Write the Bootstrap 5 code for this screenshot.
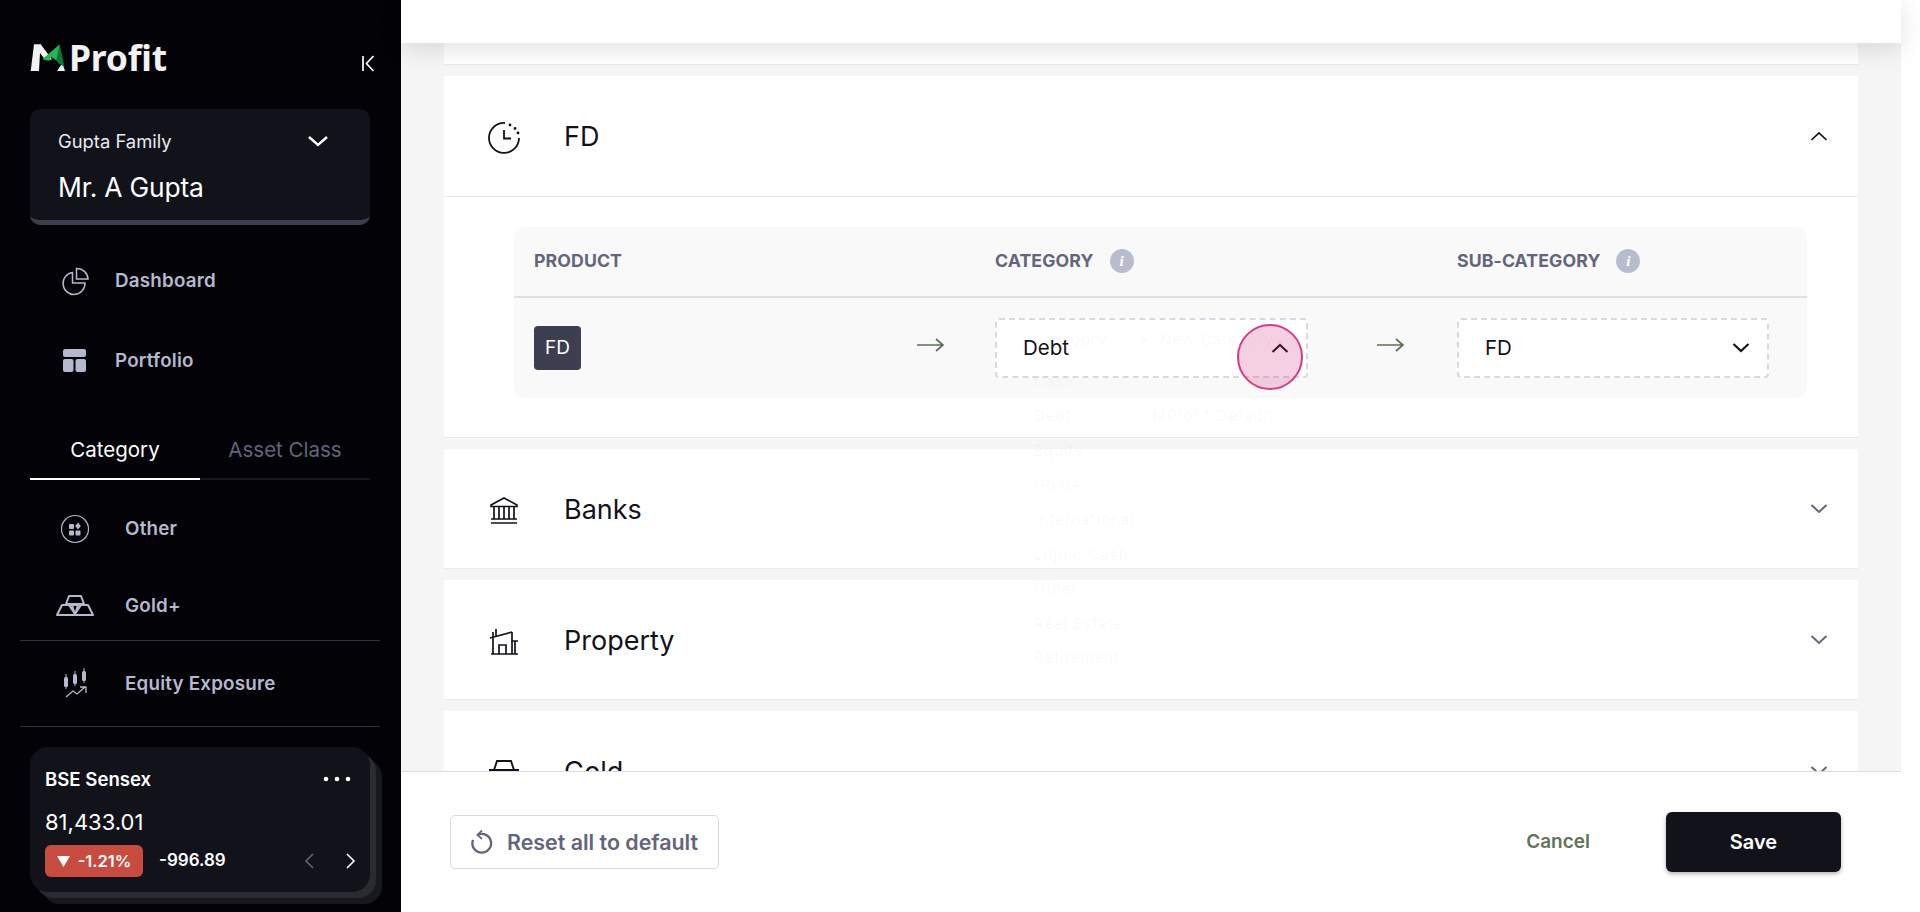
<!DOCTYPE html>
<html lang="en">
<head>
<meta charset="utf-8">
<title>MProfit</title>
<link href="https://cdn.jsdelivr.net/npm/bootstrap@5.3.0/dist/css/bootstrap.min.css" rel="stylesheet">
<style>
html,body{height:100%;overflow:hidden}
body{font-family:Inter,"Liberation Sans",sans-serif;background:#fff;color:#12131a}
.app-shell{height:912px}
.side-pane{width:401px;background:#020207;flex:none;padding:43px 0 0}
.logo-row{padding:0 26px 0 30px;height:66px}
.logo-word{font-family:"Noto Sans",sans-serif;font-weight:700;font-size:35.500px;line-height:29px;color:#f2f2f2;letter-spacing:-.2px;margin-left:-3px}
.collapse-ico{margin-top:11px}
.family-box{margin:0 31px 0 30px;height:116px;background:#12131a;border-radius:10px;border-bottom:5px solid #3d3f50;padding:20px 28px}
.family-sub{font-size:18.400px;line-height:24px;color:#e8e9f0}
.family-chev{margin-right:13px}
.family-name{font-size:26.400px;line-height:32px;color:#fff;margin-top:18px;letter-spacing:-.2px}
.side-link{padding-left:60px;height:80px;color:#b6b9cd;font-size:18.800px;font-weight:600;letter-spacing:.2px}
.side-link svg{width:30px;height:30px;margin-right:25px;flex:none}
.side-tabs{margin:22px 31px 0 30px;height:57px;font-size:20.500px}
.side-tab{width:170px;text-align:center;border-bottom:2px solid #17181f;color:#62657c;padding-top:12px}
.side-tab-on{color:#fff;border-bottom-color:#fff}
.cat-link{padding-left:50px;padding-top:2px;height:77px;color:#b6b9cd;font-size:18.800px;font-weight:600;letter-spacing:.2px}
.cat-link svg{width:50px;height:36px;margin-right:25px;margin-top:-2px;flex:none}
.cat-first{margin-top:10px}
.cat-last{height:73px;padding-top:5px}
.cat-tall{height:85px}
.side-rule{margin:0 21px 0 20px;border-top:1px solid #30323f}
.quote-box{margin:20px 31px 0 30px;height:145px;background:#12131a;border-radius:18px;padding:19px 15px;position:relative;color:#fff;box-shadow:6px 6px 0 #2a2b30,12px 12px 0 #18191e}
.quote-name{font-size:18.600px;font-weight:600;line-height:26px}
.quote-value{font-size:22px;line-height:28px;margin-top:16px}
.quote-row{margin-top:9px}
.quote-badge{background:#c84b40;border-radius:6px;height:32px;width:98px;font-size:16.500px;font-weight:600}
.quote-delta{font-size:17px;font-weight:600}
.quote-gap{margin-right:30px}
.quote-next{margin-right:-2px}
.main-pane{width:1500px;background:#f5f5f5;flex:none;position:relative}
.top-strip{height:43px;background:#fff;box-shadow:0 6px 24px rgba(0,0,0,.12);position:relative;z-index:3}
.scroll-zone{height:728px;overflow:hidden;padding:0 43px;position:relative}
.acc-stub{height:22px;background:#fff;border-bottom:1px solid #e9e9ee;margin-bottom:11px}
.acc-item{background:#fff;border-bottom:1px solid #e9e9ee;margin-bottom:11px}
.acc-head{height:119px;padding:0 30px 0 43px;font-size:27px}
.acc-head svg.acc-ico{width:34px;height:34px;margin-right:43px;margin-top:2px;flex:none}
.acc-title{padding-top:3px}
.acc-open{height:121px;border-bottom:1px solid #e9e9ee}
.map-wrap{padding:30px 51px 39px 70px}
.map-table{background:#f9f9f9;border-radius:10px;height:171px}
.map-grid{display:grid;grid-template-columns:481px 313px 149px 312px}
.map-headrow{height:71px;border-bottom:2px solid #dfdfe8;font-size:17.700px;font-weight:700;color:#62657c;letter-spacing:.1px;align-items:center}
.map-headrow>div:first-child{padding-left:20px}
.map-bodyrow{height:100px;align-items:start;padding-top:20px}
.prod-cell{padding:8px 51px 0 20px}
.arrow-mark{margin-top:11px}
.fd-chip{width:47px;height:44px;background:#3d3f50;border-radius:4px;color:#fff;font-size:19px}
.info-dot{width:24px;height:24px;border-radius:50%;background:#b8bccd;color:#fff;font-family:"Liberation Serif",serif;font-style:italic;font-weight:700;font-size:15px;margin-left:16px}
.dash-select{height:60px;background:#fff;border:2px dashed #d6d8e4;border-radius:4px;font-size:20.500px;padding:0 17px 0 26px;position:relative}
.arrow-cell{padding:19px 53px 0 0}
.ghost-menu{position:absolute;left:37px;top:3px;width:240px;color:rgba(0,0,0,.035);font-size:15px;letter-spacing:1px;line-height:34.600px;white-space:nowrap}
.ghost-gap{margin-top:7px}
.tap-mark{position:absolute;left:240px;top:4px;width:66px;height:66px;border-radius:50%;background:rgba(214,59,138,.24);border:2px solid #d63b8a}
.foot-bar{height:141px;background:#fff;border-top:1px solid #dcdce8;padding:0 60px 0 49px}
.reset-btn{width:269px;height:54px;background:#fff;border:1px solid #d8dae6;border-radius:5px;color:#62657c;font-size:21.400px;font-weight:600;padding:0 0 0 18px;white-space:nowrap;column-gap:13px}
.cancel-link{color:#62745c;font-size:19px;font-weight:600;margin-right:76px}
.save-btn{width:175px;height:60px;background:#12131a;color:#fff;border:0;border-radius:6px;font-size:20px;font-weight:600;box-shadow:0 2px 4px rgba(0,0,0,.3)}
.edge-strip{flex:1;background:#fff}
</style>
</head>
<body>
<div class="app-shell d-flex">
  <aside class="side-pane">
    <div class="logo-row d-flex justify-content-between align-items-start">
      <div class="d-flex">
        <svg width="42" height="30" viewBox="0 0 42 30"><path fill="#f2f2f2" d="M.7 28 4 1.300H10.700L22 16.500H15L10 10 9 28Z"/><path fill="#f2f2f2" d="M27 28h8L32.500 20Z"/><path fill="#22b455" d="M12.300 16.300 29.700 1.300 27.300 18 20.700 13.700 19 18Z"/><path fill="#0d7434" d="M29.700 1.300 34.500 24 28 20 26.500 17Z"/></svg>
        <span class="logo-word">Profit</span>
      </div>
      <svg class="collapse-ico" width="14" height="19" viewBox="0 0 14 19"><path d="M2 2v15M12.500 2 5.500 9.500l7 7.500" fill="none" stroke="#fff" stroke-width="1.700"/></svg>
    </div>
    <div class="family-box">
      <div class="d-flex justify-content-between align-items-center family-sub"><span>Gupta Family</span>
        <svg class="family-chev" width="22" height="12" viewBox="0 0 22 12"><path d="M2 2l9 8 9-8" fill="none" stroke="#fff" stroke-width="2.400"/></svg></div>
      <div class="family-name">Mr. A Gupta</div>
    </div>
    <div class="mt-3">
    <div class="side-link d-flex align-items-center">
      <svg viewBox="0 0 30 30" fill="none" stroke="#b6b9cd" stroke-width="1.500"><path d="M12.500 6.500A11 11 0 1 0 25 17H12.500Z"/><path d="M16.500 2.500v10.500H28A11 11 0 0 0 16.500 2.500Z"/></svg>Dashboard</div>
    <div class="side-link d-flex align-items-center">
      <svg viewBox="0 0 30 30" fill="#b6b9cd"><rect x="3" y="3" width="23" height="8" rx="2"/><rect x="3" y="13" width="10.500" height="13" rx="2"/><rect x="15.500" y="13" width="10.500" height="13" rx="2"/></svg>Portfolio</div>
    </div>
    <div class="side-tabs d-flex">
      <div class="side-tab side-tab-on">Category</div>
      <div class="side-tab">Asset Class</div>
    </div>
    <div class="cat-link cat-first d-flex align-items-center">
      <svg viewBox="0 0 50 36" fill="none"><circle cx="25" cy="18" r="13.500" stroke="#b6b9cd" stroke-width="1.200"/><g fill="#b6b9cd"><rect x="19" y="13" width="5" height="5" rx="1"/><rect x="19" y="19.500" width="5" height="5" rx="1"/><rect x="25.500" y="19.500" width="5" height="5" rx="1"/><path d="M28 11.500l2.800 3.500-2.800 3.500-2.800-3.500Z"/></g></svg>Other</div>
    <div class="cat-link cat-last d-flex align-items-center">
      <svg viewBox="0 0 50 36" fill="none" stroke="#b6b9cd" stroke-width="2" stroke-linejoin="round"><path d="M19 9h12l3 8H16ZM12 18h10l3 10H7ZM28 18h10l5 10H25ZM19 18h12l-6 9Z"/></svg>Gold+</div>
    <div class="side-rule"></div>
    <div class="cat-link cat-tall d-flex align-items-center">
      <svg viewBox="0 0 50 36" fill="#b6b9cd"><rect x="14" y="11" width="4" height="10" rx="1.500"/><rect x="15.500" y="8" width="1" height="15"/><rect x="23" y="8" width="4" height="10" rx="1.500"/><rect x="24.500" y="5" width="1" height="15"/><rect x="32" y="5" width="4" height="10" rx="1.500"/><rect x="33.500" y="2" width="1" height="15"/><path d="M16 31l7-6 4 3 8-7M30 21h6v6" fill="none" stroke="#b6b9cd" stroke-width="1.300"/></svg>Equity Exposure</div>
    <div class="side-rule"></div>
    <div class="quote-box">
      <div class="d-flex justify-content-between align-items-center quote-name"><span>BSE Sensex</span>
        <svg class="me-1" width="28" height="6" viewBox="0 0 28 6" fill="#fff"><circle cx="3" cy="3" r="2.300"/><circle cx="14" cy="3" r="2.300"/><circle cx="25" cy="3" r="2.300"/></svg></div>
      <div class="quote-value">81,433.01</div>
      <div class="d-flex align-items-center quote-row">
        <div class="quote-badge d-flex align-items-center justify-content-center gap-2">
          <svg width="13" height="11" viewBox="0 0 13 11" fill="#fff"><path d="M0 0h13L6.500 11Z"/></svg>-1.21%</div>
        <div class="quote-delta ms-3 flex-grow-1">-996.89</div>
        <svg class="quote-gap" width="12" height="18" viewBox="0 0 12 18"><path d="M10 2 3 9l7 7" fill="none" stroke="#62657c" stroke-width="1.600"/></svg>
        <svg class="quote-next" width="12" height="18" viewBox="0 0 12 18"><path d="M2 2l7 7-7 7" fill="none" stroke="#fff" stroke-width="1.600"/></svg>
      </div>
    </div>
  </aside>

  <main class="main-pane d-flex flex-column">
    <div class="top-strip"></div>
    <div class="scroll-zone">
      <div class="acc-stub"></div>
      <section class="acc-item">
        <div class="acc-head acc-open d-flex align-items-center">
          <svg class="acc-ico" viewBox="0 0 34 34" fill="none" stroke="#12131a" stroke-width="1.800"><path d="M18 3A15 15 0 1 0 32 18"/><path d="M17 10v8.500h7"/><g fill="#12131a" stroke="none"><circle cx="23" cy="5" r="1.400"/><circle cx="28" cy="8.500" r="1.400"/><circle cx="31" cy="13" r="1.400"/></g></svg>
          <span class="acc-title flex-grow-1">FD</span>
          <svg width="18" height="10" viewBox="0 0 18 10"><path d="M1.500 9 9 2l7.500 7" fill="none" stroke="#12131a" stroke-width="1.700"/></svg>
        </div>
        <div class="map-wrap">
          <div class="map-table">
            <div class="map-grid map-headrow">
              <div>PRODUCT</div>
              <div class="d-flex align-items-center">CATEGORY<span class="info-dot d-flex align-items-center justify-content-center">i</span></div>
              <div></div>
              <div class="d-flex align-items-center">SUB-CATEGORY<span class="info-dot d-flex align-items-center justify-content-center">i</span></div>
            </div>
            <div class="map-grid map-bodyrow">
              <div class="prod-cell d-flex justify-content-between align-items-start">
                <div class="fd-chip d-flex align-items-center justify-content-center">FD</div>
                <svg class="arrow-mark" width="27" height="16" viewBox="0 0 27 16"><path d="M0 8h26M19 2l7 6-7 6" fill="none" stroke="#5e7058" stroke-width="1.700"/></svg>
              </div>
              <div class="dash-select d-flex align-items-center justify-content-between">
                <span>Debt</span>
                <svg width="18" height="10" viewBox="0 0 18 10"><path d="M1.500 9 9 2l7.500 7" fill="none" stroke="#12131a" stroke-width="2.200"/></svg>
                <div class="ghost-menu">
                  <div class="d-flex justify-content-between"><span>Category</span><span>+&nbsp; New Category</span></div>
                  <div class="ghost-gap">Cash</div>
                  <div class="d-flex justify-content-between"><span>Debt</span><span>MProfit Default</span></div>
                  <div>Equity</div><div>Gold+</div><div>International</div><div>Liquid Cash</div><div>Other</div><div>Real Estate</div><div>Retirement</div>
                </div>
                <div class="tap-mark"></div>
              </div>
              <div class="arrow-cell d-flex justify-content-end align-items-start">
                <svg width="27" height="16" viewBox="0 0 27 16"><path d="M0 8h26M19 2l7 6-7 6" fill="none" stroke="#5e7058" stroke-width="1.700"/></svg>
              </div>
              <div class="dash-select d-flex align-items-center justify-content-between">
                <span>FD</span>
                <svg width="18" height="10" viewBox="0 0 18 10"><path d="M1.500 1 9 8l7.500-7" fill="none" stroke="#12131a" stroke-width="2.200"/></svg>
              </div>
            </div>
          </div>
        </div>
      </section>
      <section class="acc-item">
        <div class="acc-head d-flex align-items-center">
          <svg class="acc-ico" viewBox="0 0 34 34" fill="none" stroke="#12131a" stroke-width="1.700"><path d="M4 12 17 5l13 7v1.500H4Z"/><path d="M7 13.500V26M12 13.500V26M17 13.500V26M22 13.500V26M27 13.500V26M4 26h26M4 30h26"/></svg>
          <span class="acc-title flex-grow-1">Banks</span>
          <svg width="18" height="10" viewBox="0 0 18 10"><path d="M1.500 1 9 8l7.500-7" fill="none" stroke="#62657c" stroke-width="2"/></svg>
        </div>
      </section>
      <section class="acc-item">
        <div class="acc-head d-flex align-items-center">
          <svg class="acc-ico" viewBox="0 0 34 34" fill="none" stroke="#12131a" stroke-width="1.700"><path d="M4 30h27M6 30V8M3 14l22-6M9 5v7M25 8v22M28 17v13M31 17h-6M12 30v-9h7v9"/></svg>
          <span class="acc-title flex-grow-1">Property</span>
          <svg width="18" height="10" viewBox="0 0 18 10"><path d="M1.500 1 9 8l7.500-7" fill="none" stroke="#62657c" stroke-width="2"/></svg>
        </div>
      </section>
      <section class="acc-item">
        <div class="acc-head d-flex align-items-center">
          <svg class="acc-ico" viewBox="0 0 34 34" fill="none" stroke="#12131a" stroke-width="1.900"><path d="M10 6h14l3 9H7ZM2 15h30"/></svg>
          <span class="acc-title flex-grow-1">Gold</span>
          <svg width="18" height="10" viewBox="0 0 18 10"><path d="M1.500 1 9 8l7.500-7" fill="none" stroke="#62657c" stroke-width="2"/></svg>
        </div>
      </section>
    </div>
    <div class="foot-bar d-flex align-items-center justify-content-between">
      <button class="reset-btn btn d-flex align-items-center">
        <svg width="25" height="27" viewBox="0 0 28 30" fill="none" stroke="#62657c" stroke-width="2.600"><path d="M9.500 6.500A10.500 10.500 0 1 1 4.500 12"/><path d="M14.500 1.500 9.500 6.500l5 4.500" stroke-width="2"/></svg>
        Reset all to default</button>
      <div class="d-flex align-items-center">
        <span class="cancel-link">Cancel</span>
        <button class="save-btn btn">Save</button>
      </div>
    </div>
  </main>
  <div class="edge-strip"></div>
</div>
<script src="https://cdn.jsdelivr.net/npm/bootstrap@5.3.0/dist/js/bootstrap.bundle.min.js"></script>
</body>
</html>
